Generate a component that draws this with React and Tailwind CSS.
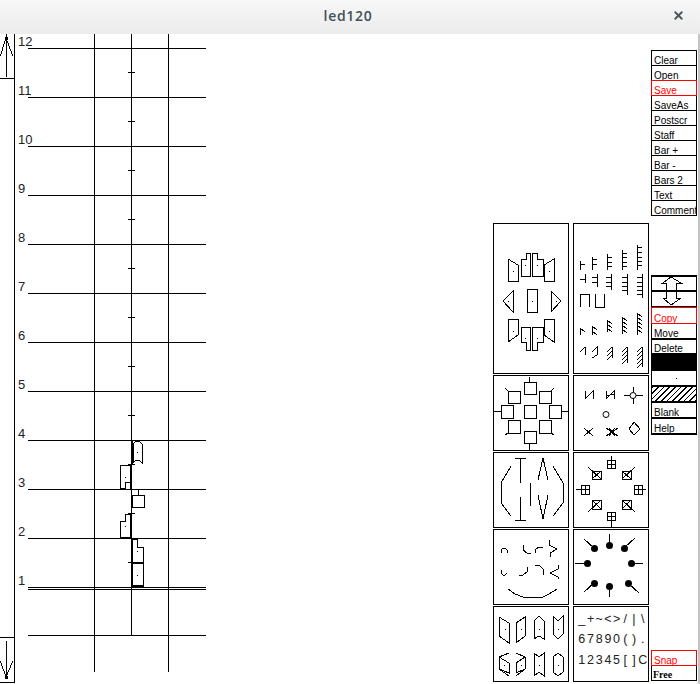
import { X } from 'lucide-react';

const menuTop = ['Clear', 'Open', 'Save', 'SaveAs', 'Postscr', 'Staff', 'Bar +', 'Bar -', 'Bars 2', 'Text', 'Comment'];
const staffLines = [48, 97, 146, 195, 244, 293, 342, 391, 440, 489, 538, 587];
const glyphRows = [
  { chars: ['_', '+', '~', '<', '>', '/', '|', '\\'], cls: '' },
  { chars: ['6', '7', '8', '9', '0', '(', ')', '.'], cls: 'mt-[5px]' },
  { chars: ['1', '2', '3', '4', '5', '[', ']', 'C'], cls: 'mt-[6px]' },
];

function Poly({ d, dot }) {
  return (
    <>
      <polygon points={d} fill="none" stroke="black" />
      {dot && <rect x={dot[0]} y={dot[1]} width="1" height="1" fill="black" stroke="none" />}
    </>
  );
}

function Lines({ items }) {
  return items.map((d, i) => <polyline key={i} points={d} fill="none" stroke="black" />);
}

// tile drawn in page coordinates, so the viewBox is just the tile's inner box
function Tile({ x, y, h, children }) {
  return (
    <div className="border border-black bg-white overflow-hidden">
      <svg width="74" height={h} viewBox={`${x} ${y} 74 ${h}`} shapeRendering="crispEdges" className="block">
        {children}
      </svg>
    </div>
  );
}

function MenuBtn({ label, red, thick, h = 'h-[15px]' }) {
  const border = red
    ? 'relative border-x border-b border-[#ff0000] text-[#ff0000] shadow-[0_-1px_0_#ff0000]'
    : thick
      ? 'border-x border-b-2 border-black text-black'
      : 'border-x border-b border-black text-black';
  return (
    <div className={`${h} ${border} flex items-end pl-[2px] text-[10px] leading-[9px] whitespace-nowrap overflow-hidden`}>
      {label}
    </div>
  );
}

function Staff() {
  const ticks = [72, 121, 170, 219, 268, 317, 366, 415, 464, 513, 562];
  return (
    <svg width="191" height="650" viewBox="15 34 191 650" shapeRendering="crispEdges" className="block shrink-0">
      {staffLines.map((y, i) => (
        <g key={y}>
          <line x1="28" y1={y + 0.5} x2="206" y2={y + 0.5} stroke="black" />
          <text x="18" y={y - 2} fontSize="13" fontFamily="'Liberation Sans', sans-serif" fill="#222">
            {12 - i}
          </text>
        </g>
      ))}
      <line x1="28" y1="589.5" x2="206" y2="589.5" stroke="black" />
      <line x1="28" y1="635.5" x2="206" y2="635.5" stroke="black" />
      <line x1="94.5" y1="34" x2="94.5" y2="672" stroke="black" />
      <line x1="168.5" y1="34" x2="168.5" y2="672" stroke="black" />
      <line x1="131.5" y1="34" x2="131.5" y2="635" stroke="black" />
      {ticks.map((y) => (
        <line key={y} x1="128" y1={y + 0.5} x2="135" y2={y + 0.5} stroke="black" />
      ))}
      {/* notes */}
      <polygon points="133,444 136,441 139,441 142,444 142,463 139,460 136,460 133,463" fill="none" stroke="black" />
      <rect x="137" y="452" width="1" height="1" />
      <rect x="131" y="441" width="2" height="23" />
      <polygon points="120,465 130,465 130,482 125,482 125,489 120,489" fill="none" stroke="black" />
      <polyline points="125,482 125,489 130,489" fill="none" stroke="black" />
      <rect x="125" y="477" width="1" height="1" />
      <rect x="130" y="464" width="2" height="25" />
      <rect x="120" y="488" width="5" height="2" />
      <rect x="132.5" y="495.5" width="12" height="12" fill="none" stroke="black" />
      <line x1="138.5" y1="489" x2="138.5" y2="495" stroke="black" />
      <polygon points="120,521 125,521 125,514 130,514 130,537 120,537" fill="none" stroke="black" />
      <rect x="125" y="526" width="1" height="1" />
      <rect x="130" y="514" width="2" height="24" />
      <rect x="120" y="537" width="11" height="1" />
      <polygon points="132,539 137,539 137,547 143,547 143,562 132,562" fill="none" stroke="black" />
      <rect x="137" y="551" width="1" height="1" />
      <rect x="131" y="539" width="2" height="47" />
      <rect x="132" y="562" width="11" height="2" />
      <rect x="132" y="563" width="11" height="23" fill="none" stroke="black" />
      <rect x="132" y="585" width="11" height="2" />
      <rect x="137" y="575" width="1" height="1" />
    </svg>
  );
}

function Flags() {
  const up = [
    [580, 261, [264]],
    [592, 257, [259, 264]],
    [607, 254, [257, 262, 266]],
    [622, 250, [253, 257, 262, 266]],
    [637, 245, [247, 252, 257, 261, 265]],
  ];
  const down = [
    [585, 283, [279]],
    [597, 287, [277, 282]],
    [611, 290, [277, 282, 286]],
    [627, 295, [277, 282, 286, 290]],
    [642, 298, [277, 282, 286, 290, 294]],
  ];
  const slantUp = [
    [580, 328, 335, [328]],
    [592, 326, 335, [326, 331]],
    [607, 320, 332, [320, 324, 328]],
    [622, 317, 334, [317, 321, 325, 329]],
    [637, 313, 335, [313, 317, 321, 325, 329]],
  ];
  const slantDown = [
    [585, 355, [352]],
    [612, 358, [352, 356, 360]],
    [627, 363, [352, 356, 360, 364]],
    [642, 367, [352, 356, 360, 364, 368]],
  ];
  return (
    <>
      {up.map(([x, top, bs]) => (
        <g key={x}>
          <line x1={x} y1={top} x2={x} y2="270" stroke="black" />
          {bs.map((b) => <line key={b} x1={x} y1={b} x2={x + 5} y2={b} stroke="black" />)}
        </g>
      ))}
      {down.map(([x, bottom, bs]) => (
        <g key={x}>
          <line x1={x} y1="274" x2={x} y2={bottom} stroke="black" />
          {bs.map((b) => <line key={b} x1={x - 5} y1={b} x2={x} y2={b} stroke="black" />)}
        </g>
      ))}
      <Lines items={['580,307 580,294 589,294 589,307', '595,294 595,307 604,307 604,294']} />
      {slantUp.map(([x, top, bottom, bs]) => (
        <g key={x}>
          <line x1={x} y1={top} x2={x} y2={bottom} stroke="black" />
          {bs.map((b) => <line key={b} x1={x} y1={b} x2={x + 5} y2={b + 4} stroke="black" />)}
        </g>
      ))}
      {slantDown.map(([x, bottom, bs]) => (
        <g key={x}>
          <line x1={x} y1="347" x2={x} y2={bottom} stroke="black" />
          {bs.map((b) => <line key={b} x1={x - 5} y1={b} x2={x} y2={b - 5} stroke="black" />)}
        </g>
      ))}
      <Lines items={['592,352 597,347 597,355 592,358']} />
    </>
  );
}

export default function App() {
  return (
    <div className="w-[700px] h-[684px] overflow-hidden bg-white flex flex-col font-['Liberation_Sans',sans-serif]">
      <div className="h-[34px] shrink-0 bg-gradient-to-b from-[#f7f7f7] to-[#ececec] flex items-center justify-center relative pb-[3px] pr-[4px]">
        <span className="font-['Open_Sans',sans-serif] font-semibold text-[14px] tracking-[0.7px] text-[#454f55]">led120</span>
        <X className="absolute right-[15px] top-[9px] w-[13px] h-[13px] text-[#4c5559]" strokeWidth={3.5} />
      </div>

      <div className="flex-1 flex min-h-0">
        {/* scroll bar */}
        <div className="w-[15px] shrink-0 border-r border-black flex flex-col justify-between h-[649px]">
          <svg width="14" height="45" viewBox="0 34 14 45" shapeRendering="crispEdges" className="block border-b border-black">
            <line x1="6.5" y1="34" x2="6.5" y2="78" stroke="black" />
            <polyline points="0,57 6,38 13,57" fill="none" stroke="black" />
            <rect x="5" y="37" width="3" height="3" />
          </svg>
          <svg width="14" height="46" viewBox="0 637 14 46" shapeRendering="crispEdges" className="block border-y border-black">
            <line x1="6.5" y1="640" x2="6.5" y2="678" stroke="black" />
            <polyline points="0,661 6,678 13,661" fill="none" stroke="black" />
            <rect x="5" y="677" width="3" height="3" />
          </svg>
        </div>

        <Staff />

        <div className="flex-1 flex justify-end relative">
          {/* palettes */}
          <div className="grid grid-cols-[76px_76px] gap-x-[4px] gap-y-[1px] content-start mt-[189px] mr-[2px]">
            <Tile x={494} y={224} h={149}>
              <Poly d="508,259 518,265 518,281 508,281" dot={[513, 271]} />
              <Poly d="521,276 521,259 526,259 526,253 530,253 530,276" dot={[525, 265]} />
              <Poly d="532,253 537,253 537,259 543,259 543,276 532,276" dot={[537, 265]} />
              <Poly d="544,265 554,259 554,281 544,281" dot={[549, 271]} />
              <Poly d="503,301 513,291 513,312" dot={[508, 301]} />
              <Poly d="527,289 537,289 537,312 527,312" dot={[532, 301]} />
              <Poly d="551,291 561,301 551,312" dot={[556, 301]} />
              <Poly d="508,319 518,319 518,335 508,342" dot={[513, 331]} />
              <Poly d="521,327 530,327 530,350 526,350 526,342 521,342" dot={[525, 338]} />
              <Poly d="532,327 543,327 543,342 537,342 537,350 532,350" dot={[537, 338]} />
              <Poly d="544,319 554,319 554,342 544,335" dot={[549, 331]} />
            </Tile>
            <Tile x={574} y={224} h={149}>
              <Flags />
            </Tile>

            <Tile x={494} y={376} h={74}>
              <Poly d="524,382 536,382 536,394 524,394" />
              <Poly d="508,391 520,391 520,403 508,403" />
              <Poly d="539,391 551,391 551,403 539,403" />
              <Poly d="501,405 513,405 513,418 501,418" />
              <Poly d="524,405 536,405 536,418 524,418" />
              <Poly d="549,405 561,405 561,418 549,418" />
              <Poly d="508,420 520,420 520,433 508,433" />
              <Poly d="539,420 551,420 551,433 539,433" />
              <Poly d="524,431 536,431 536,443 524,443" />
              <Lines items={['529,377 529,382', '508,391 505,388', '551,391 554,388', '494,411 501,411', '561,411 569,411', '508,433 505,435', '551,433 554,435', '529,443 529,450']} />
            </Tile>
            <Tile x={574} y={376} h={74}>
              <Lines items={['585,391 585,399 593,391 593,399', '606,391 606,399 614,391 614,399', '606,396 614,394', '624,395 630,395', '636,395 643,395', '633,387 633,392', '633,398 633,404', '584,428 593,436', '593,428 584,436', '606,428 618,436', '618,428 606,436', '609,428 615,436', '615,428 609,436']} />
              <circle cx="633" cy="395.5" r="3" fill="none" stroke="black" shapeRendering="geometricPrecision" />
              <circle cx="606" cy="414.5" r="3" fill="none" stroke="black" shapeRendering="geometricPrecision" />
              <Poly d="634,422 640,429 634,435 629,429" />
            </Tile>

            <Tile x={494} y={453} h={74}>
              <Lines items={['515,458 526,458', '520,458 520,483', '515,520 526,520', '520,497 520,520', '530,483 530,506', '511,466 501,483 501,503 511,516', '553,466 563,483 563,503 553,516', '538,480 543,458 548,480', '538,495 543,519 548,495']} />
            </Tile>
            <Tile x={574} y={453} h={74}>
              <Poly d="607,460 615,460 615,468 607,468" />
              <Poly d="592,471 601,471 601,479 592,479" />
              <Poly d="622,471 631,471 631,479 622,479" />
              <Poly d="581,485 589,485 589,494 581,494" />
              <Poly d="634,485 642,485 642,494 634,494" />
              <Poly d="592,500 601,500 601,509 592,509" />
              <Poly d="622,500 631,500 631,509 622,509" />
              <Poly d="607,512 615,512 615,520 607,520" />
              <Lines items={['611,456 611,468', '607,464 615,464', '588,467 601,479', '592,479 601,471', '635,467 622,479', '622,471 631,479', '576,489 589,489', '585,485 585,494', '634,489 646,489', '638,485 638,494', '588,512 601,500', '592,500 601,509', '622,509 631,500', '622,500 635,512', '611,512 611,527', '607,516 615,516']} />
            </Tile>

            <Tile x={494} y={530} h={74}>
              <Lines items={['501,553 501,550 503,548 505,548 507,550 507,553', '501,570 501,573 503,575 505,575 507,573', '523,545 523,550 527,553 531,553', '535,553 535,550 539,547 543,547', '549,540 549,545 557,549 550,553 550,557', '519,575 523,575 527,572 527,567', '535,565 539,565 543,569 543,575', '558,565 558,569 550,573 558,577 558,579', '508,589 515,594 523,597 543,597 549,594 557,589']} />
            </Tile>
            <Tile x={574} y={530} h={74}>
              <Lines items={['609,534 609,545', '584,539 594,548', '635,538 624,548', '575,563 587,563', '643,563 631,563', '584,592 594,583', '639,593 628,583', '609,597 609,586']} />
              {[[609, 545], [594, 548], [624, 548], [587, 563], [631, 563], [594, 583], [628, 583], [609, 586]].map(([cx, cy]) => (
                <circle key={`${cx}-${cy}`} cx={cx + 0.5} cy={cy + 0.5} r="3.5" fill="black" shapeRendering="geometricPrecision" />
              ))}
            </Tile>

            <Tile x={494} y={607} h={74}>
              <Poly d="499,617 509,623 509,643 499,636" dot={[505, 629]} />
              <Poly d="516,623 525,617 525,636 516,643" dot={[521, 629]} />
              <Poly d="534,621 539,616 544,621 544,639 539,636 534,639" dot={[539, 629]} />
              <Poly d="553,616 558,621 563,616 563,634 558,639 553,634" dot={[558, 629]} />
              <Poly d="534,653 539,657 544,653 544,676 539,672 534,676" dot={[539, 665]} />
              <Poly d="553,657 558,653 563,657 563,672 558,676 553,672" dot={[558, 665]} />
              <Lines items={['509,653 499,657 509,663 509,673 499,669 499,657', '509,676 499,669', '516,653 525,657 516,663 516,673 525,669 525,657', '516,676 525,669']} />
              <rect x="504" y="665" width="1" height="1" />
              <rect x="521" y="665" width="1" height="1" />
            </Tile>
            <div className="border border-black bg-white overflow-hidden flex flex-col pl-[3.5px] pt-[5px] text-[12.5px] leading-[15px] text-[#222]">
              {glyphRows.map((row) => (
                <div key={row.chars[0]} className={`flex ${row.cls}`}>
                  {row.chars.map((c) => (
                    <span key={c} className="w-[8.7px] shrink-0 flex justify-center">{c}</span>
                  ))}
                </div>
              ))}
            </div>
          </div>

          {/* button column */}
          <div className="w-[46px] mr-[3px] mt-[16px] flex flex-col shrink-0">
            <div className="border-t border-black">
              {menuTop.map((label) => (
                <MenuBtn key={label} label={label} red={label === 'Save'} />
              ))}
            </div>
            <div className="mt-[59px] border-t-2 border-black">
              <div className="border-x border-b-2 border-black h-[15px]">
                <svg width="44" height="13" viewBox="0 277 44 13" shapeRendering="crispEdges" className="block">
                  <polyline points="14,290 14,283 11,283 19,277 29,283 24,283 24,290" fill="none" stroke="black" />
                </svg>
              </div>
              <div className="border-x border-b-2 border-black h-[16px]">
                <svg width="44" height="14" viewBox="0 292 44 14" shapeRendering="crispEdges" className="block">
                  <polyline points="14,292 14,298 11,298 19,305 29,298 24,298 24,292" fill="none" stroke="black" />
                </svg>
              </div>
              <MenuBtn label="Copy" red h="h-[16px]" />
              <MenuBtn label="Move" thick h="h-[16px]" />
              <MenuBtn label="Delete" h="h-[14px]" />
              <div className="h-[17px] bg-black" />
              <div className="h-[16px] border-x border-b-2 border-black flex justify-center items-center pl-[4px]">
                <span className="w-[1px] h-[1px] bg-black" />
              </div>
              <div className="h-[16px] border-x border-b-2 border-black bg-[repeating-linear-gradient(135deg,#000_0,#000_1px,#fff_1px,#fff_4px)]" />
              <MenuBtn label="Blank" thick h="h-[16px]" />
              <MenuBtn label="Help" thick h="h-[16px]" />
            </div>
            <div className="mt-auto mb-[3px]">
              <MenuBtn label="Snap" red h="h-[15px]" />
              <div className="h-[15px] border-x border-b border-black flex items-end pl-[1px] font-['Liberation_Serif',serif] font-bold text-[10px] leading-[10px]">
                Free
              </div>
            </div>
          </div>

          <div className="absolute right-0 top-0 bottom-0 w-[2px] bg-[#c4c4c4]" />
        </div>
      </div>
    </div>
  );
}
